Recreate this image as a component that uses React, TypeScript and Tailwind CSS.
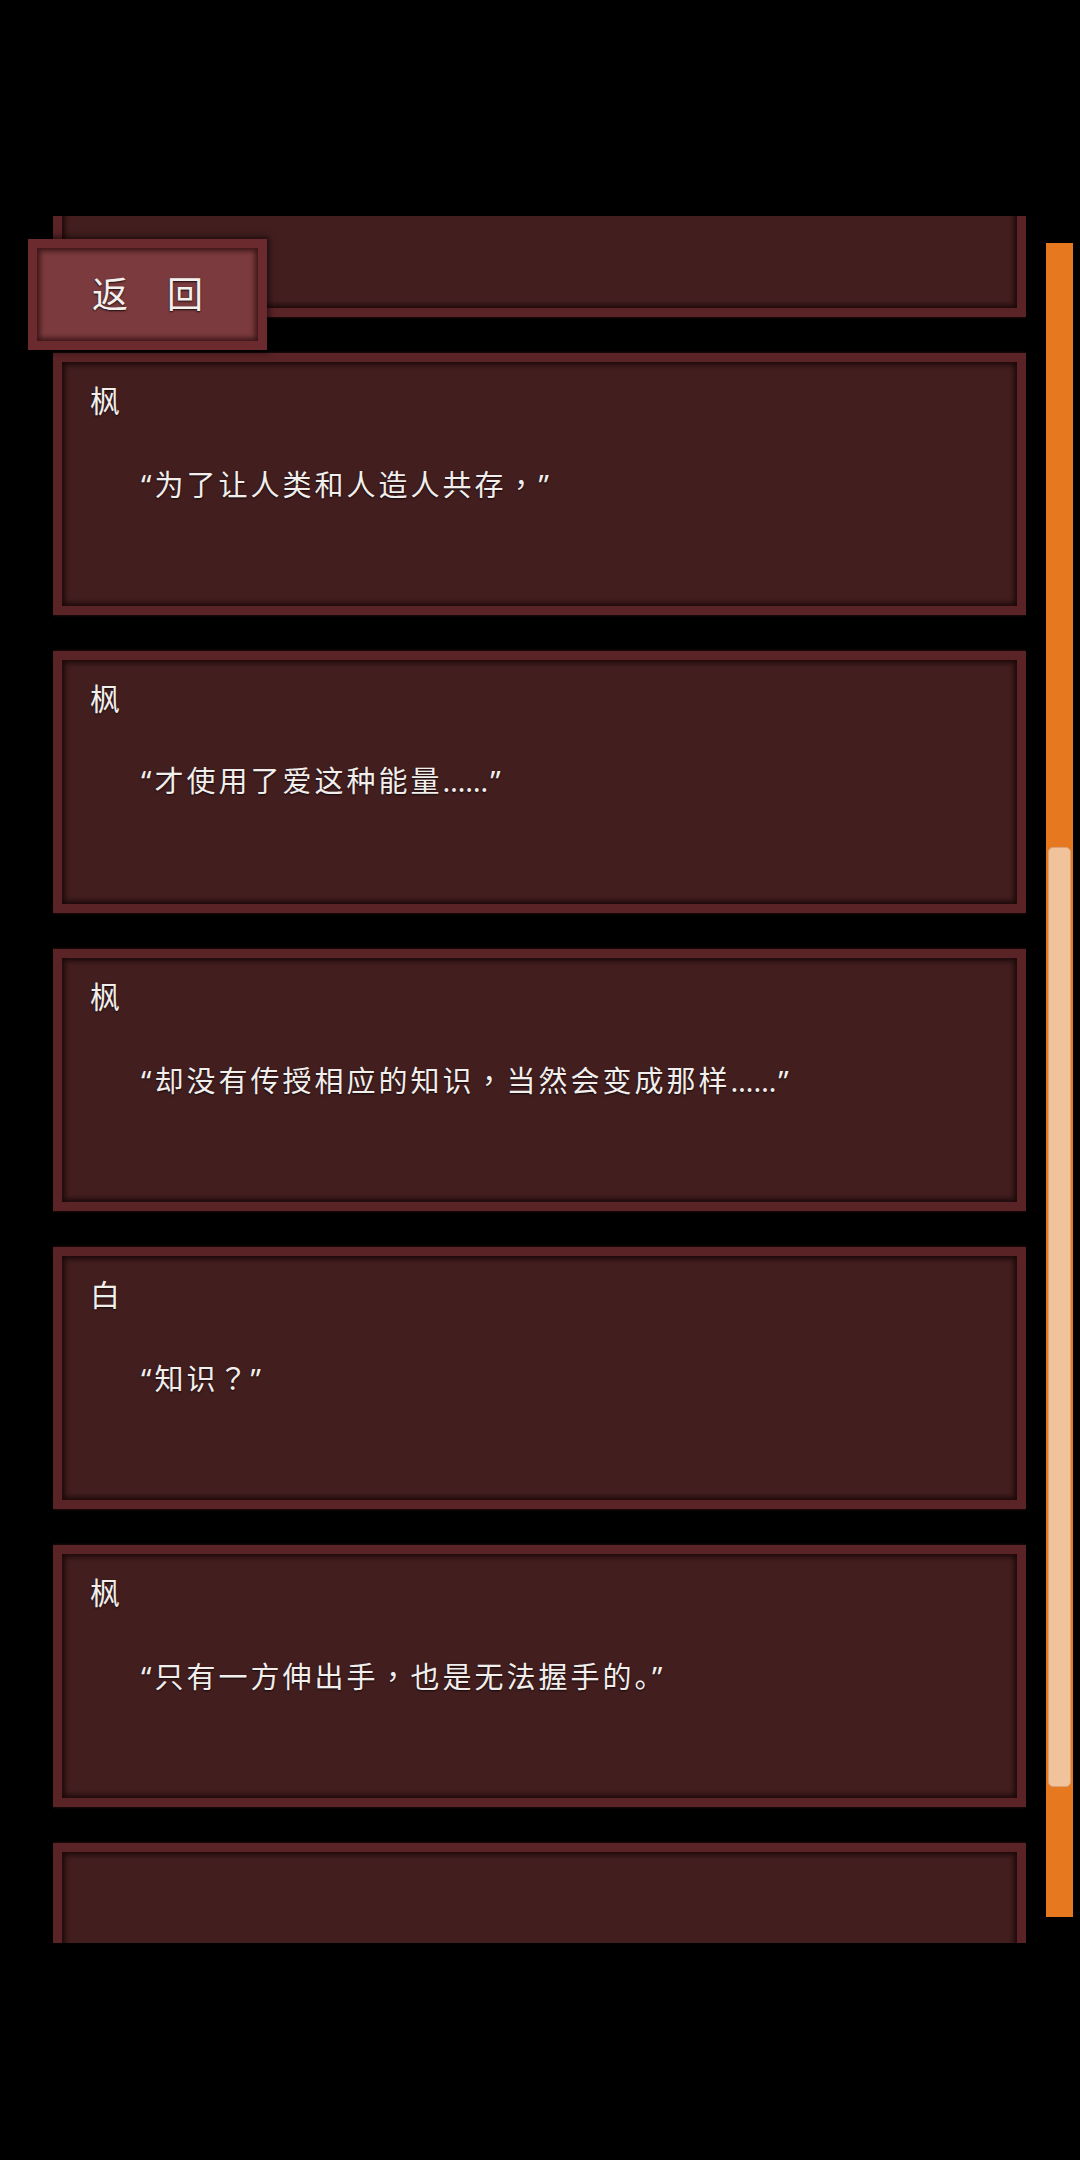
import React from 'react';

const FONT = "font-['Noto_Sans','Noto_Sans_CJK_SC',sans-serif]";

const lines = [
  { name: '', text: '' },
  { name: '枫', text: '“为了让人类和人造人共存，”' },
  { name: '枫', text: '“才使用了爱这种能量……”' },
  { name: '枫', text: '“却没有传授相应的知识，当然会变成那样……”' },
  { name: '白', text: '“知识？”' },
  { name: '枫', text: '“只有一方伸出手，也是无法握手的。”' },
  { name: '', text: '' },
];

// full-width ， and ？ sit centred in their cell in the game font
function Dialogue({ text }: { text: string }) {
  const parts = text.split(/([，？]|……)/);
  return (
    <>
      {parts.map((p, i) => {
        if (p === '，' || p === '？')
          return (
            <span key={i} className="font-['Noto_Sans_CJK_TC',sans-serif]">
              {p}
            </span>
          );
        if (p === '……')
          return (
            <span key={i} className="tracking-[0px] pr-[2px]">
              {p}
            </span>
          );
        return <React.Fragment key={i}>{p}</React.Fragment>;
      })}
    </>
  );
}

function LogCard({ name, text }: { name: string; text: string }) {
  return (
    <div className="h-[262px] w-[973px] shrink-0 border-[9px] border-[#5a2326] bg-[#421e1f] shadow-[inset_0_0_5px_3px_rgba(22,6,7,0.85),0_0_3px_rgba(90,35,38,0.6)]">
      {name && (
        <div className="pl-[28px] pt-[24px] text-[30px] leading-[30px] text-[#f1eeec] [text-shadow:0_1px_2px_rgba(0,0,0,0.7)]">
          {name}
        </div>
      )}
      {text && (
        <div className="mt-[52px] pl-[79px] text-[29px] leading-[30px] tracking-[3px] text-[#f1eeec] [text-shadow:0_1px_2px_rgba(0,0,0,0.7)]">
          <Dialogue text={text} />
        </div>
      )}
    </div>
  );
}

export default function App() {
  return (
    <main className={`relative h-[2160px] w-[1080px] overflow-hidden bg-black ${FONT}`}>
      <div className="flex pt-[216px] pl-[53px]">
        {/* backlog list, scrolled */}
        <div className="h-[1727px] w-[973px] overflow-hidden">
          <div className="-mt-[161px] flex flex-col gap-[36px]">
            {lines.map((l, i) => (
              <LogCard key={i} name={l.name} text={l.text} />
            ))}
          </div>
        </div>

        {/* scrollbar */}
        <div className="ml-[20px] mt-[27px] flex h-[1674px] w-[27px] flex-col bg-[#e6781f] px-[2px]">
          <div className="h-[604px] shrink-0" />
          <div className="h-[940px] rounded-[5px] border border-[#d9a27a] bg-[#f1c39c]" />
        </div>
      </div>

      {/* back button */}
      <button className="absolute left-[28px] top-[239px] flex h-[111px] w-[239px] items-center justify-center gap-[39px] border-[9px] border-[#6a2a2e] bg-[#7b3b3e] text-[36px] leading-none text-[#f3f0ee] shadow-[inset_0_0_5px_3px_rgba(40,10,12,0.75),0_0_6px_2px_rgba(0,0,0,0.6)] [text-shadow:0_1px_2px_rgba(0,0,0,0.8)]">
        <span>返</span>
        <span>回</span>
      </button>
    </main>
  );
}
